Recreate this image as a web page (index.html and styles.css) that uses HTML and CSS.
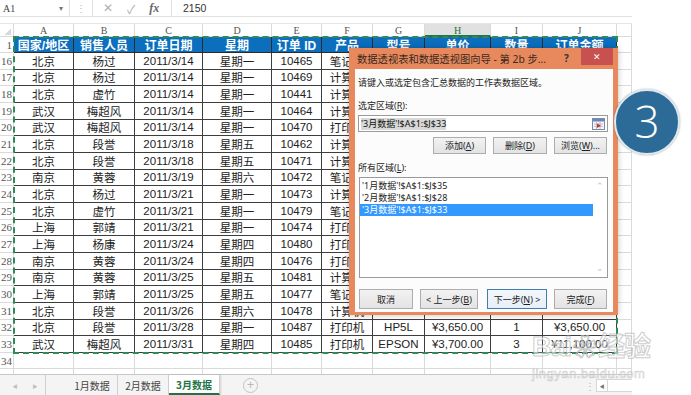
FILE: index.html
```html
<!DOCTYPE html>
<html lang="zh-CN">
<head>
  <meta charset="UTF-8" />
  <title>数据透视表和数据透视图向导</title>
  <link rel="stylesheet" href="styles.css">
</head>
<body>
  <div class="excel">
    <div class="formula-bar">
      <div class="name-box">A1<span class="name-arrow">&#9662;</span></div>
      <span class="grip">&#8942;</span>
      <div class="fx-tools">
        <span class="fx-cancel">&#10005;</span>
        <span class="fx-ok">&#10003;</span>
        <span class="fx-label">fx</span>
      </div>
      <div class="fx-value">2150</div>
    </div>

    <div class="sheet" id="sheet">
      <div class="selection"></div>
    </div>

    <div class="tabs">
      <span class="tab-nav">&#9664;</span>
      <span class="tab-nav">&#9654;</span>
      <span class="tab">1月数据</span>
      <span class="tab">2月数据</span>
      <span class="tab active">3月数据</span>
      <span class="tab-add">+</span>
      <span class="tab-spacer"></span>
      <span class="grip">&#8942;</span>
      <span class="hscroll"><span class="hscroll-btn">&#9664;</span></span>
    </div>
  </div>

  <!-- wizard dialog over the sheet -->
  <div class="dialog">
    <div class="dlg-title">
      <span class="dlg-caption">数据透视表和数据透视图向导 - 第 2b 步...</span>
      <span class="dlg-help">?</span>
      <span class="dlg-close">&#10005;</span>
    </div>
    <div class="dlg-body">
      <div class="dlg-tip">请键入或选定包含汇总数据的工作表数据区域。</div>
      <div class="dlg-label">选定区域(<u>R</u>):</div>
      <div class="dlg-input">
        <span class="input-text">'3月数据'!$A$1:$J$33</span>
        <span class="ref-btn">
          <svg width="13" height="12" viewBox="0 0 13 12">
            <rect x="0.5" y="0.5" width="12" height="11" fill="#f4f6fa" stroke="#7a8aa8"/>
            <rect x="1" y="1" width="11" height="2.5" fill="#6d87b8"/>
            <path d="M2 6h9M2 8.5h9M4.5 4v7M8 4v7" stroke="#a9b6cc" stroke-width="0.8"/>
            <path d="M5 5.5l4 2.2-4 2.2z" fill="#d3302a"/>
          </svg>
        </span>
      </div>
      <div class="dlg-actions">
        <button class="btn btn-add">添加(<u>A</u>)</button>
        <button class="btn btn-del">删除(<u>D</u>)</button>
        <button class="btn btn-browse">浏览(<u>W</u>)...</button>
      </div>
      <div class="dlg-label label-list">所有区域(<u>L</u>):</div>
      <div class="dlg-list">
        <div class="list-items">
          <div class="list-item">'1月数据'!$A$1:$J$35</div>
          <div class="list-item">'2月数据'!$A$1:$J$28</div>
          <div class="list-item selected">'3月数据'!$A$1:$J$33</div>
        </div>
        <div class="list-scroll">
          <span>&#8963;</span>
          <span>&#8964;</span>
        </div>
      </div>
      <div class="dlg-footer">
        <button class="btn btn-cancel">取消</button>
        <button class="btn btn-prev">&lt; 上一步(<u>B</u>)</button>
        <button class="btn btn-next">下一步(<u>N</u>) &gt;</button>
        <button class="btn btn-finish">完成(<u>F</u>)</button>
      </div>
    </div>
  </div>

  <div class="badge">3</div>

  <div class="watermark">
    <div class="wm-logo">Bai<span class="wm-paw">&#10048;</span>经验</div>
    <div class="wm-url">jingyan.baidu.com</div>
  </div>

  <script>
    // Sheet data: row number, then columns A..J
    const columns = ['A', 'B', 'C', 'D', 'E', 'F', 'G', 'H', 'I', 'J'];
    const header = ['国家/地区', '销售人员', '订单日期', '星期', '订单 ID', '产品', '型号', '单价', '数量', '订单金额'];
    const rows = [
      ['16', '北京', '杨过', '2011/3/14', '星期一', '10465', '笔记本'],
      ['17', '北京', '杨过', '2011/3/14', '星期一', '10469', '计算机'],
      ['18', '北京', '虚竹', '2011/3/14', '星期一', '10441', '计算机'],
      ['19', '武汉', '梅超风', '2011/3/14', '星期一', '10464', '计算机'],
      ['20', '武汉', '梅超风', '2011/3/14', '星期一', '10470', '打印机'],
      ['21', '北京', '段誉', '2011/3/18', '星期五', '10462', '计算机'],
      ['22', '北京', '段誉', '2011/3/18', '星期五', '10471', '计算机'],
      ['23', '南京', '黄蓉', '2011/3/19', '星期六', '10472', '笔记本'],
      ['24', '北京', '杨过', '2011/3/21', '星期一', '10473', '计算机'],
      ['25', '北京', '虚竹', '2011/3/21', '星期一', '10479', '笔记本'],
      ['26', '上海', '郭靖', '2011/3/21', '星期一', '10474', '打印机'],
      ['27', '上海', '杨康', '2011/3/24', '星期四', '10480', '打印机'],
      ['28', '南京', '黄蓉', '2011/3/24', '星期四', '10476', '打印机'],
      ['29', '南京', '黄蓉', '2011/3/25', '星期五', '10481', '计算机'],
      ['30', '上海', '郭靖', '2011/3/25', '星期五', '10477', '笔记本'],
      ['31', '北京', '段誉', '2011/3/26', '星期六', '10478', '计算机'],
      ['32', '北京', '段誉', '2011/3/28', '星期一', '10487', '打印机', 'HP5L', '¥3,650.00', '1', '¥3,650.00'],
      ['33', '武汉', '梅超风', '2011/3/31', '星期四', '10485', '打印机', 'EPSON', '¥3,700.00', '3', '¥11,100.00']
    ];

    const sheet = document.getElementById('sheet');

    function addCell(text, cls) {
      const cell = document.createElement('div');
      cell.className = 'cell ' + cls;
      cell.textContent = text;
      sheet.appendChild(cell);
    }

    // Column letters
    addCell('', 'corner');
    columns.forEach(letter => addCell(letter, 'col-head' + (letter === 'H' ? ' active' : '')));
    addCell('', 'col-head');

    // Header row 1
    addCell('1', 'row-head');
    header.forEach(text => addCell(text, 'th'));
    addCell('', 'empty');

    // Data rows
    rows.forEach(row => {
      addCell(row[0], 'row-head');
      for (let i = 1; i <= 10; i++) addCell(row[i] || '', 'td');
      addCell('', 'empty');
    });

    // Empty rows below the table
    ['34', '35'].forEach(num => {
      addCell(num, 'row-head');
      for (let i = 0; i < 11; i++) addCell('', 'empty');
    });
  </script>
</body>
</html>
```

FILE: styles.css
```css
body {
  margin: 0;
  width: 691px;
  height: 395px;
  overflow: hidden;
  background: #fff;
  font-family: "Liberation Sans", "Noto Sans CJK SC", sans-serif;
  position: relative;
}

.excel {
  width: 632px;
  height: 395px;
  display: flex;
  flex-direction: column;
}

/* Formula bar */
.formula-bar {
  height: 16px;
  display: flex;
  align-items: center;
  border-bottom: 1px solid #e2e2e2;
  margin-bottom: 6px;
  color: #444;
}
.name-box {
  width: 70px;
  height: 16px;
  box-sizing: border-box;
  padding-left: 3px;
  display: flex;
  align-items: center;
  font-family: "Liberation Serif", serif;
  font-size: 10px;
  border-right: 1px solid #e2e2e2;
}
.name-arrow {
  margin-left: auto;
  margin-right: 6px;
  font-size: 8px;
  color: #777;
}
.grip {
  color: #b5b5b5;
  font-size: 10px;
  width: 22px;
  text-align: center;
}
.fx-tools {
  width: 80px;
  height: 16px;
  display: flex;
  align-items: center;
  border-left: 1px solid #e2e2e2;
  border-right: 1px solid #e2e2e2;
  box-sizing: border-box;
  gap: 14px;
  padding-left: 10px;
  color: #b0b0b0;
  font-size: 12px;
}
.fx-label {
  font-family: "Liberation Serif", serif;
  font-style: italic;
  font-weight: bold;
  color: #666;
  font-size: 12px;
}
.fx-value {
  padding-left: 11px;
  font-size: 10.5px;
  color: #333;
}

/* Grid */
.sheet {
  position: relative;
  height: 352px;
  overflow: hidden;
  display: grid;
  grid-template-columns: 14px 60px 61px 68px 69px 50px 51px 52px 66px 52px 74px 15px;
  grid-template-rows: 13px 16px repeat(20, 16.67px);
  border-top: 1px solid #e6e6e6;
  box-sizing: border-box;
}
.cell {
  box-sizing: border-box;
  border-right: 1px solid #dadada;
  border-bottom: 1px solid #dadada;
  display: flex;
  align-items: center;
  justify-content: center;
  overflow: hidden;
  white-space: nowrap;
  font-size: 11.5px;
  color: #222;
}
.corner {
  background: linear-gradient(135deg, transparent 60%, #d8d8d8 60%) no-repeat 3px 3px / 8px 8px;
}
.col-head {
  font-family: "Liberation Serif", serif;
  font-size: 10px;
  color: #555;
  padding-top: 1px;
}
.col-head.active {
  background: #e1e1e1;
  color: #217346;
  border-bottom: 2px solid #217346;
}
.row-head {
  justify-content: flex-end;
  padding-right: 1px;
  font-family: "Liberation Serif", serif;
  font-size: 11px;
  color: #555;
}
.th {
  background: #0b6fbe;
  color: #fff;
  font-weight: bold;
  font-size: 12px;
  border-color: #2b2b2b;
}
.td {
  border-color: #3d3d3d;
}

/* Copy marquee around A1:J33 */
.selection {
  position: absolute;
  left: 13px;
  top: 12px;
  width: 605px;
  height: 318px;
  border: 2px dashed #2f8a57;
  box-sizing: border-box;
  pointer-events: none;
}

/* Sheet tabs */
.tabs {
  height: 20px;
  display: flex;
  align-items: stretch;
  border-top: 1px solid #c8c8c8;
  background: #f4f4f4;
  font-family: "Noto Sans CJK SC", sans-serif;
  font-size: 10px;
  color: #444;
}
.tab-nav {
  width: 20px;
  display: flex;
  align-items: center;
  justify-content: center;
  font-size: 5px;
  color: #bdbdbd;
}
.tab-nav:first-child {
  margin-left: 5px;
}
.tab-nav + .tab-nav {
  margin-right: 21px;
  border-right: 1px solid #d0d0d0;
}
.tab {
  width: 50px;
  display: flex;
  align-items: center;
  justify-content: center;
  border-right: 1px solid #d0d0d0;
}
.tab.active {
  background: #fff;
  color: #217346;
  font-weight: bold;
  border-bottom: 2px solid #217346;
  box-shadow: 1px 0 2px rgba(0, 0, 0, 0.15);
}
.tab-add {
  width: 13px;
  height: 13px;
  margin: 3px 0 0 23px;
  border: 1px solid #c4c4c4;
  border-radius: 50%;
  color: #b8b8b8;
  font-size: 12px;
  line-height: 12px;
  text-align: center;
  font-family: "Liberation Sans", sans-serif;
}
.tab-spacer {
  flex: 1;
}
.tabs .grip {
  width: 12px;
  display: flex;
  align-items: center;
  justify-content: center;
}
.hscroll {
  width: 35px;
  margin: 4px 0 3px;
  background: #fff;
  border: 1px solid #d6d6d6;
  border-right: none;
  display: flex;
}
.hscroll-btn {
  width: 10px;
  font-size: 5px;
  color: #777;
  border-right: 1px solid #d6d6d6;
  display: flex;
  align-items: center;
  justify-content: center;
}

/* Wizard dialog */
.dialog {
  position: absolute;
  left: 349px;
  top: 48px;
  width: 269px;
  height: 267px;
  box-sizing: border-box;
  padding: 0 5px 3px 6px;
  background: #e7895d;
  box-shadow: 0 0 6px rgba(0, 0, 0, 0.25);
  display: flex;
  flex-direction: column;
  font-family: "Noto Sans", "Noto Sans CJK SC", sans-serif;
  font-size: 9px;
  color: #222;
}
.dlg-title {
  height: 21px;
  display: flex;
  align-items: flex-start;
}
.dlg-caption {
  margin: 4px 0 0 2px;
  font-size: 10.3px;
  line-height: 14px;
  color: #3b2a22;
  white-space: nowrap;
}
.dlg-help {
  margin: 3px 0 0 auto;
  width: 12px;
  font-weight: bold;
  font-size: 10px;
  color: #333;
}
.dlg-close {
  width: 32px;
  height: 17px;
  margin-left: 5px;
  background: #c8504f;
  color: #fff;
  font-size: 9px;
  display: flex;
  align-items: center;
  justify-content: center;
}
.dlg-body {
  flex: 1;
  background: #fcfcfc;
  display: flex;
  flex-direction: column;
  padding: 8px 5px 0 3px;
}
.dlg-tip,
.dlg-label {
  line-height: 12px;
  height: 12px;
}
.dlg-label {
  margin-top: 11px;
}
.label-list {
  margin-top: 8px;
}
.dlg-input {
  margin-top: 3px;
  height: 17px;
  box-sizing: border-box;
  border: 1px solid #9a9a9a;
  background: #fff;
  display: flex;
  align-items: center;
  padding-left: 2px;
}
.input-text {
  background: #d8d8d8;
  color: #111;
  line-height: 12px;
}
.ref-btn {
  margin-left: auto;
  margin-right: 1px;
  width: 15px;
  height: 13px;
  display: flex;
  align-items: center;
  justify-content: center;
}
.btn {
  box-sizing: border-box;
  border: 1px solid #adadad;
  background: linear-gradient(#f2f2f2, #e3e3e3);
  font-family: inherit;
  font-size: 9px;
  color: #222;
  padding: 0;
  margin: 0;
}
.dlg-actions {
  margin-top: 5px;
  height: 17px;
  display: flex;
  justify-content: flex-end;
  gap: 7px;
  padding-right: 1px;
}
.btn-add,
.btn-browse {
  width: 53px;
}
.btn-del {
  width: 54px;
}
.dlg-list {
  margin: 3px 0 0 1px;
  height: 101px;
  box-sizing: border-box;
  border: 1px solid #9a9a9a;
  background: #fff;
  display: flex;
}
.list-items {
  flex: 1;
  padding-top: 2px;
}
.list-item {
  height: 12px;
  line-height: 12px;
  padding-left: 2px;
}
.list-item.selected {
  background: #3399ff;
  color: #fff;
}
.list-scroll {
  width: 14px;
  display: flex;
  flex-direction: column;
  justify-content: space-between;
  align-items: center;
  color: #c2c2c2;
  font-size: 9px;
  padding: 1px 0 3px;
}
.dlg-footer {
  margin: 11px 0 0 1px;
  height: 20px;
  display: flex;
  gap: 7px;
}
.btn-cancel {
  width: 54px;
}
.btn-prev {
  width: 58px;
}
.btn-next {
  width: 60px;
  margin-left: 2px;
  border-color: #3c7fb1;
  background: linear-gradient(#f4f8fc, #e6eef7);
}
.btn-finish {
  width: 53px;
}

/* Step badge */
.badge {
  position: absolute;
  left: 614px;
  top: 89px;
  width: 66px;
  height: 66px;
  box-sizing: border-box;
  border-radius: 50%;
  background: #2c6b97;
  border: 2px solid #dfe8ee;
  box-shadow: 0 0 2px rgba(0, 0, 0, 0.35);
  color: #fff;
  font-family: "Open Sans", "Lato", sans-serif;
  font-weight: 300;
  font-size: 44px;
  line-height: 60px;
  text-align: center;
}

/* Baidu jingyan watermark */
.watermark {
  position: absolute;
  left: 532px;
  top: 332px;
  color: rgba(255, 255, 255, 0.55);
  -webkit-text-stroke: 1px rgba(170, 170, 170, 0.6);
  pointer-events: none;
}
.wm-logo {
  font-family: "Liberation Sans", "Noto Sans CJK SC", sans-serif;
  font-weight: bold;
  font-size: 27px;
  line-height: 30px;
  letter-spacing: -1px;
}
.wm-paw {
  font-size: 24px;
  margin: 0 2px;
}
.wm-url {
  font-family: "Liberation Sans", sans-serif;
  font-size: 13px;
  letter-spacing: 0.5px;
  margin-top: 3px;
  -webkit-text-stroke: 0.6px rgba(170, 170, 170, 0.6);
}
```
